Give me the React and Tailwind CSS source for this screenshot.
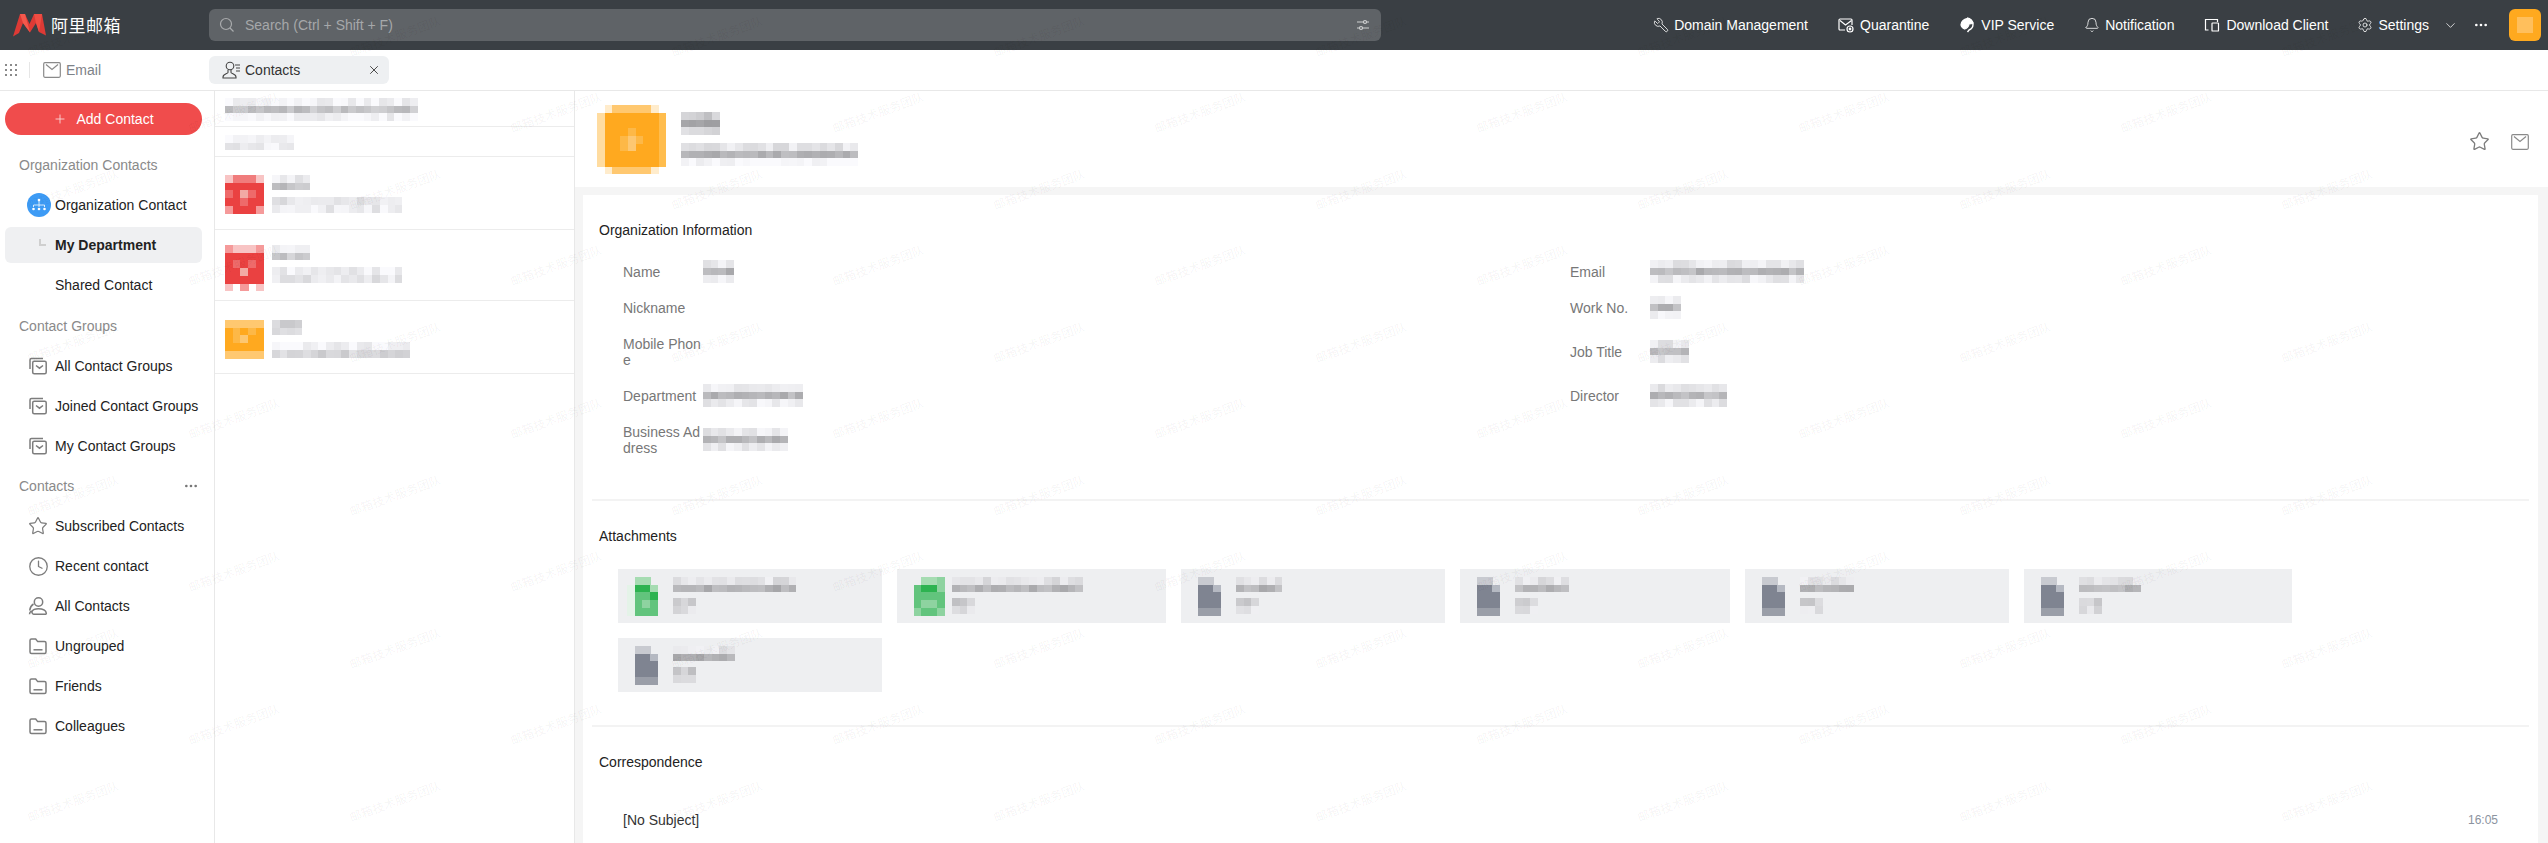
import React from 'react';
import { Bell, ChevronDown, Clock, Ellipsis, Plus, Settings, Star, Wrench, X } from 'lucide-react';

const CELL = 7.7;

// small deterministic noise, so the blurred blocks stay the same on every render
const noise = (seed, i) => {
  const v = Math.sin(seed * 97.13 + i * 12.9898) * 43758.5453;
  return v - Math.floor(v);
};

// pixelated block from rows of palette keys
const Mosaic = ({ rows, palette, cell = CELL, className = '' }) => (
  <svg
    className={`block shrink-0 ${className}`}
    width={rows[0].length * cell}
    height={rows.length * cell}
    shapeRendering="crispEdges"
  >
    {rows.map((row, y) =>
      row.split('').map((key, x) =>
        palette[key] ? (
          <rect key={`${x}-${y}`} x={x * cell} y={y * cell} width={cell + 0.5} height={cell + 0.5} fill={palette[key]} />
        ) : null
      )
    )}
  </svg>
);

// pixelated stand-in for a text line that was blurred out in the screenshot
const TextBlur = ({ cols, seed = 1, levels = [232, 184, 234], className = '' }) => (
  <svg
    className={`block shrink-0 ${className}`}
    width={cols * CELL}
    height={levels.length * 7.7}
    shapeRendering="crispEdges"
  >
    {levels.map((level, y) =>
      Array.from({ length: cols }).map((_, x) => {
        const g = Math.min(250, Math.round(level + (noise(seed + y, x) - 0.5) * 30));
        return (
          <rect
            key={`${x}-${y}`}
            x={x * CELL}
            y={y * 7.7}
            width={CELL + 0.5}
            height={8}
            fill={`rgb(${g},${g},${g + 3})`}
          />
        );
      })
    )}
  </svg>
);

const ORANGE = { p: '#ffeccc', o: '#ffc870', l: '#ffdca0', m: '#ffbd4e', O: '#ffa91f', c: '#fdb847', C: '#fdc771' };
const RED = { p: '#f8c4c4', o: '#f07c7c', O: '#ea4141', c: '#ee6a6a', C: '#f2aaa4', l: '#f59a9a' };
const GREEN = { a: '#a6dcb2', G: '#2db350', g: '#62c47d', h: '#8ed3a0', l: '#e4f3e8' };
const GRAY = { a: '#c8cad0', G: '#7f8491', b: '#b5b9c2', d: '#9a9ea8' };

const BIG_AVATAR = ['.pooooop.', 'lOOOOOOOm', 'lOOOOOOOm', 'lOOOcOOOm', 'lOOcCcOOm', 'lOOcCOOOm', 'lOOOOOOOm', 'lOOOOOOOm', '.pooooop.'];
const SMALL_ORANGE = ['ooooo', 'OcOcO', 'OcCOO', 'OOOOO', 'ooooo'];
const RED_A = ['pooop', 'OOOOO', 'cOCcO', 'OOcOO', 'lOOOl'];
const RED_B = ['lpppl', 'OOOOO', 'OcOcO', 'OOCOO', 'OOOOO', 'p.l.p'];
const GREEN_FILE = ['.aa.', 'lGGa', 'lggG', 'lghg', 'lggg'];
const GREEN_FILE_B = ['..aah', '.gGGh', '.gggg', '.ghhg', '.hggh'];
const GRAY_FILE = ['.aa.', '.GGb', '.GGG', '.GGG', '.ddd'];

const TopIcon = ({ children }) => (
  <svg width="18" height="18" viewBox="0 0 18 18" fill="none" stroke="currentColor" strokeWidth="1.2" className="shrink-0">
    {children}
  </svg>
);

const NAV_ITEMS = [
  { label: 'Domain Management', gap: 'mr-[29px]', icon: <Wrench size={16} strokeWidth={1.2} className="-scale-x-100" /> },
  {
    label: 'Quarantine',
    gap: 'mr-[29px]',
    icon: (
      <TopIcon>
        <path d="M8 14H3a1 1 0 0 1-1-1V4a1 1 0 0 1 1-1h11a1 1 0 0 1 1 1v5" />
        <path d="M3 4.5l5.5 4.5 6-4.5" />
        <circle cx="13" cy="13" r="3" />
        <circle cx="13" cy="13" r="0.8" fill="currentColor" />
      </TopIcon>
    ),
  },
  {
    label: 'VIP Service',
    gap: 'mr-[30px]',
    icon: (
      <TopIcon>
        <path d="M9 2a6.5 6.5 0 0 1 6 6.5 6 6 0 0 1-4 5.5l-1.5 2" strokeWidth="1.4" />
        <path d="M9 2.5C6 3 3 5.500 3 8.500c0 2 1.500 3.500 3.500 4.500 2-.5 4.500-2.500 4.500-5 1.500 0 3-.2 4-1-1.300-2.500-3.500-4.500-6-4.500z" fill="currentColor" />
      </TopIcon>
    ),
  },
  { label: 'Notification', gap: 'mr-[29px]', icon: <Bell size={16} strokeWidth={1.2} /> },
  {
    label: 'Download Client',
    gap: 'mr-[29px]',
    icon: (
      <TopIcon>
        <path d="M5.500 14H2.500V3.500h12V6" />
        <rect x="9" y="7" width="6.500" height="8" rx="0.600" />
      </TopIcon>
    ),
  },
  { label: 'Settings', gap: 'mr-[14px]', icon: <Settings size={16} strokeWidth={1.2} /> },
];

const GroupIcon = () => (
  <svg width="20" height="20" viewBox="0 0 20 20" fill="none" stroke="#7d7d7d" strokeWidth="1.5">
    <path d="M2 13V4a1.500 1.500 0 0 1 1.500-1.500H15" />
    <rect x="4.700" y="5.200" width="13.500" height="12.500" rx="1.500" />
    <path d="M8 9.500l3.500 2.700 3.500-2.700" />
  </svg>
);

const StarIcon = ({ size = 20 }) => <Star size={size} strokeWidth={1.5} color="#7d7d7d" />;
const ClockIcon = () => <Clock size={21} strokeWidth={1.5} color="#7d7d7d" />;

const PersonIcon = () => (
  <svg width="20" height="20" viewBox="0 0 20 20" fill="none" stroke="#7d7d7d" strokeWidth="1.5">
    <circle cx="10.500" cy="6" r="4.200" />
    <path d="M5.500 8C3 9.500 2 12 1.700 14.500" />
    <path d="M1.500 18.200c0-1.500.5-2.500 2-3.400M6 18.300h11c1 0 1.500-.5 1.300-1.300-.5-2.700-3.500-4.300-8-4.300-3 0-5.500 1.200-6.300 2.700-.4 1.500.8 2.900 2 2.900z" />
  </svg>
);

const FolderIcon = () => (
  <svg width="20" height="20" viewBox="0 0 20 20" fill="none" stroke="#7d7d7d" strokeWidth="1.5">
    <path d="M2 4.500A1.500 1.500 0 0 1 3.500 3h4.200l2 2.600h6.800a1.500 1.500 0 0 1 1.500 1.500v9a1.500 1.500 0 0 1-1.500 1.500h-13A1.500 1.500 0 0 1 2 16.100z" />
    <path d="M5.500 13.800h9" />
  </svg>
);

const OrgIcon = () => (
  <span className="w-[24px] h-[24px] rounded-full bg-[#3d9bf5] flex items-center justify-center">
    <svg width="16" height="16" viewBox="0 0 16 16" fill="#fff" stroke="#fff">
      <circle cx="8" cy="3" r="1.300" stroke="none" />
      <path d="M8 4v4M2.500 10V8h11v2M8 8v2" strokeWidth="0.800" fill="none" />
      <circle cx="2.500" cy="12" r="1.300" stroke="none" />
      <circle cx="8" cy="12" r="1.300" stroke="none" />
      <circle cx="13.500" cy="12" r="1.300" stroke="none" />
    </svg>
  </span>
);

const MailIcon = ({ className = '' }) => (
  <svg width="18" height="16" viewBox="0 0 18 16" fill="none" stroke="#8a8a8a" strokeWidth="1.200" className={className}>
    <rect x="0.700" y="0.700" width="16.600" height="14.600" rx="1.200" />
    <path d="M3 2.500l6 5 6-5" />
  </svg>
);

const GROUP_ROWS = ['All Contact Groups', 'Joined Contact Groups', 'My Contact Groups'];
const CONTACT_ROWS = [
  { label: 'Subscribed Contacts', icon: <StarIcon /> },
  { label: 'Recent contact', icon: <ClockIcon /> },
  { label: 'All Contacts', icon: <PersonIcon /> },
  { label: 'Ungrouped', icon: <FolderIcon /> },
  { label: 'Friends', icon: <FolderIcon /> },
  { label: 'Colleagues', icon: <FolderIcon /> },
];

const SectionLabel = ({ children }) => (
  <div className="h-[40px] pl-[14px] flex items-center text-[14px] text-[#8a8a8a]">{children}</div>
);

const SideRow = ({ icon, label }) => (
  <div className="h-[40px] pl-[23px] flex items-center text-[14px] text-[#222]">
    <span className="w-[27px] shrink-0 flex items-center">{icon}</span>
    {label}
  </div>
);

const Sidebar = () => (
  <aside className="w-[215px] shrink-0 border-r border-[#e8e8e8] px-[5px] pt-[12px]">
    <button className="w-[197px] h-[32px] rounded-full bg-[#f04c4c] text-white text-[14px] flex items-center justify-center gap-[9px]">
      <Plus size={14} strokeWidth={1.5} className="opacity-80" />
      Add Contact
    </button>
    <div className="mt-[10px]">
      <SectionLabel>Organization Contacts</SectionLabel>
    </div>
    <div className="h-[40px] pl-[22px] flex items-center text-[14px] text-[#222]">
      <span className="w-[28px] shrink-0">
        <OrgIcon />
      </span>
      Organization Contact
    </div>
    <div className="w-[197px] h-[36px] mt-[2px] pl-[34px] rounded-md bg-[#eff0f2] flex items-center text-[14px] font-bold text-[#222]">
      <span className="w-[16px] h-[8px] -mt-[5px] shrink-0 flex">
        <span className="w-[7px] h-[7px] border-l-2 border-b-2 border-[#cfcfcf]" />
      </span>
      My Department
    </div>
    <div className="h-[40px] mt-[2px] pl-[50px] flex items-center text-[14px] text-[#222]">Shared Contact</div>
    <div className="pt-px">
      <SectionLabel>Contact Groups</SectionLabel>
    </div>
    {GROUP_ROWS.map((label) => (
      <SideRow key={label} label={label} icon={<GroupIcon />} />
    ))}
    <div className="relative w-[197px]">
      <SectionLabel>Contacts</SectionLabel>
      <Ellipsis size={16} color="#777" className="absolute right-[3px] top-[12px]" />
    </div>
    {CONTACT_ROWS.map((row) => (
      <SideRow key={row.label} label={row.label} icon={row.icon} />
    ))}
  </aside>
);

const ContactList = () => (
  <section className="w-[360px] shrink-0 border-r border-[#e8e8e8]">
    <div className="h-[36px] pl-[10px] pt-[7px] border-b border-[#ececec]">
      <TextBlur cols={25} seed={3} levels={[242, 196, 244]} />
    </div>
    <div className="h-[30px] pl-[10px] pt-[8px] border-b border-[#ececec]">
      <TextBlur cols={9} seed={5} levels={[240, 238]} />
    </div>
    <div className="h-[73px] pl-[10px] pt-[18px] flex border-b border-[#ececec]">
      <Mosaic rows={RED_A} palette={RED} />
      <div className="ml-[8px] flex flex-col gap-[7px]">
        <TextBlur cols={5} seed={7} levels={[236, 194]} />
        <TextBlur cols={17} seed={8} levels={[228, 236]} />
      </div>
    </div>
    <div className="h-[71px] pl-[10px] pt-[15px] flex border-b border-[#ececec]">
      <Mosaic rows={RED_B} palette={RED} />
      <div className="ml-[8px] flex flex-col gap-[7px]">
        <TextBlur cols={5} seed={9} levels={[236, 200]} />
        <TextBlur cols={17} seed={10} levels={[238, 230]} />
      </div>
    </div>
    <div className="h-[73px] pl-[10px] pt-[19px] flex border-b border-[#ececec]">
      <Mosaic rows={SMALL_ORANGE} palette={ORANGE} />
      <div className="ml-[8px] flex flex-col gap-[7px]">
        <TextBlur cols={4} seed={11} levels={[210, 210]} />
        <TextBlur cols={18} seed={12} levels={[240, 214]} />
      </div>
    </div>
  </section>
);

const INFO_ROWS = [
  { label: 'Name', h: 'h-[36px]', value: <TextBlur cols={4} seed={20} levels={[238, 180, 232]} />, right: 'Email', rightValue: <TextBlur cols={20} seed={21} /> },
  { label: 'Nickname', h: 'h-[36px]', value: null, right: 'Work No.', rightValue: <TextBlur cols={4} seed={22} /> },
  { label: 'Mobile Phone', h: 'h-[52px]', value: null, right: 'Job Title', rightValue: <TextBlur cols={5} seed={23} /> },
  { label: 'Department', h: 'h-[36px]', value: <TextBlur cols={13} seed={24} />, right: 'Director', rightValue: <TextBlur cols={10} seed={25} /> },
  { label: 'Business Address', h: 'h-[52px]', value: <TextBlur cols={11} seed={26} />, right: null, rightValue: null },
];

const InfoCell = ({ label, value, x }) => (
  <div className={`${x} flex items-center text-[14px] leading-[16px] text-[#777]`}>
    <span className="w-[80px] shrink-0 break-all">{label}</span>
    {value}
  </div>
);

const ATTACHMENTS = [
  { rows: GREEN_FILE, palette: GREEN, name: 16, size: 3, seed: 31, width: 'w-[264px]' },
  { rows: GREEN_FILE_B, palette: GREEN, name: 17, size: 3, seed: 32, width: 'w-[269px]' },
  { rows: GRAY_FILE, palette: GRAY, name: 6, size: 3, seed: 33, width: 'w-[264px]' },
  { rows: GRAY_FILE, palette: GRAY, name: 7, size: 3, seed: 34, width: 'w-[270px]' },
  { rows: GRAY_FILE, palette: GRAY, name: 7, size: 3, seed: 35, width: 'w-[264px]' },
  { rows: GRAY_FILE, palette: GRAY, name: 8, size: 3, seed: 36, width: 'w-[268px]' },
  { rows: GRAY_FILE, palette: GRAY, name: 8, size: 3, seed: 37, width: 'w-[264px]' },
];

const AttachmentCard = ({ rows, palette, name, size, seed, width }) => (
  <div className={`${width} h-[54px] bg-[#eeeff1] flex pt-[8px] pl-[9px]`}>
    <span className="w-[46px] shrink-0">
      <Mosaic rows={rows} palette={palette} />
    </span>
    <div className="flex flex-col gap-[6px]">
      <TextBlur cols={name} seed={seed} levels={[226, 180]} />
      <TextBlur cols={size} seed={seed + 40} levels={[205, 224]} />
    </div>
  </div>
);

const Detail = () => (
  <main className="flex-1 min-w-0 bg-[#f5f5f5] overflow-hidden">
    <header className="h-[96px] bg-white flex items-start pl-[22px] pr-[19px] pt-[14px]">
      <Mosaic rows={BIG_AVATAR} palette={ORANGE} />
      <div className="ml-[15px] mt-[7px] flex flex-col gap-[8px]">
        <TextBlur cols={5} seed={41} levels={[205, 170, 222]} />
        <TextBlur cols={23} seed={42} levels={[228, 180, 250]} />
      </div>
      <div className="ml-auto mt-[26px] flex items-center gap-[21px]">
        <StarIcon size={21} />
        <MailIcon />
      </div>
    </header>
    <div className="mt-[8px] ml-[8px] mr-[10px] bg-white">
      <div className="mx-[9px] pt-[18px] h-[306px] border-b-2 border-[#f3f3f3]">
        <h3 className="h-[34px] pl-[7px] flex items-center text-[14px] text-[#222] font-normal">Organization Information</h3>
        <div className="mt-[7px] pl-[31px]">
          {INFO_ROWS.map((row) => (
            <div key={row.label} className={`${row.h} flex`}>
              <InfoCell x="w-[947px]" label={row.label} value={row.value} />
              {row.right && <InfoCell x="flex-1" label={row.right} value={row.rightValue} />}
            </div>
          ))}
        </div>
      </div>
      <div className="mx-[9px] pt-[18px] h-[226px] border-b-2 border-[#f3f3f3]">
        <h3 className="h-[34px] pl-[7px] flex items-center text-[14px] text-[#222] font-normal">Attachments</h3>
        <div className="mt-[16px] pl-[26px] w-[1720px] flex flex-wrap gap-x-[15px] gap-y-[15px]">
          {ATTACHMENTS.map((item) => (
            <AttachmentCard key={item.seed} {...item} />
          ))}
        </div>
      </div>
      <div className="mx-[9px] pt-[18px]">
        <h3 className="h-[34px] pl-[7px] flex items-center text-[14px] text-[#222] font-normal">Correspondence</h3>
        <div className="mt-[20px] ml-[24px] mr-[23px] h-[46px] pl-[7px] pr-[8px] pb-[2px] flex items-center justify-between border-b-2 border-[#f3f3f3]">
          <span className="text-[14px] text-[#333]">[No Subject]</span>
          <span className="text-[12px] text-[#8b93a0]">16:05</span>
        </div>
      </div>
    </div>
  </main>
);

const Watermarks = () => {
  const marks = [];
  for (let col = 0; col < 15; col++) {
    for (let row = 0; row < 6; row++) {
      const top = (col % 2 === 0 ? 36 : 112) + row * 153;
      if (top < 810) marks.push({ left: 73 + col * 161, top });
    }
  }
  return (
    <div className="absolute inset-0 overflow-hidden pointer-events-none">
      {marks.map((m) => (
        <span
          key={`${m.left}-${m.top}`}
          className="absolute whitespace-nowrap text-[12px] leading-none text-black/[0.05] -translate-x-1/2 -translate-y-1/2 -rotate-[20deg]"
          style={{ left: m.left, top: m.top, fontFamily: '"Noto Sans CJK SC", sans-serif' }}
        >
          邮箱技术服务团队
        </span>
      ))}
    </div>
  );
};

export default function App() {
  return (
    <div className="relative w-[2548px] h-[843px] overflow-hidden bg-white flex flex-col font-['Liberation_Sans',Arial,sans-serif]">
      {/* Top bar */}
      <div className="h-[50px] shrink-0 bg-[#3a3f44] flex items-center">
        <div className="w-[209px] shrink-0 pl-[13px] flex items-center">
          <svg width="33" height="23" viewBox="0 0 33 23">
            <path d="M0 22.500L7 0h5l4.500 10L21 0h8l4 21.500-7-3.500-3-9-6 9.500L10 9l-4 10z" fill="#dd3a35" />
            <path d="M7 0h5l5 18.500L10 9z" fill="#f4584c" />
            <path d="M21 0h8l-3 18-3-9z" fill="#ef4d43" />
          </svg>
          <span className="ml-[5px] text-[17px] tracking-[0.5px] text-white font-['Noto_Sans_CJK_SC',sans-serif]">阿里邮箱</span>
        </div>
        <div className="w-[1172px] h-[32px] rounded-md bg-[#5f6367] flex items-center pl-[10px] pr-[10px]">
          <svg width="16" height="16" viewBox="0 0 16 16" fill="none" stroke="#a9abad" strokeWidth="1.200">
            <circle cx="7" cy="7" r="5.500" />
            <path d="M11 11l3.500 3.500" />
          </svg>
          <span className="ml-[10px] text-[14px] text-[#a6a8aa]">Search (Ctrl + Shift + F)</span>
          <svg width="16" height="16" viewBox="0 0 16 16" fill="none" stroke="#d0d1d2" strokeWidth="1.200" className="ml-auto">
            <path d="M2 5h12M2 11h12" />
            <circle cx="10" cy="5" r="1.500" fill="#5f6367" />
            <circle cx="6" cy="11" r="1.500" fill="#5f6367" />
          </svg>
        </div>
        <nav className="ml-auto flex items-center text-[14px] text-white">
          {NAV_ITEMS.map((item) => (
            <div key={item.label} className={`flex items-center gap-[5px] ${item.gap}`}>
              {item.icon}
              {item.label}
            </div>
          ))}
          <ChevronDown size={15} strokeWidth={1.2} />
          <Ellipsis size={16} className="ml-[15px]" />
          <span className="ml-[20px] mr-[7px] w-[32px] h-[32px] rounded-md bg-[#ffa91f] overflow-hidden flex items-center justify-center">
            <span className="w-[16px] h-[16px] bg-[#ffbf5c]" />
          </span>
        </nav>
      </div>

      {/* Tab row */}
      <div className="h-[41px] shrink-0 border-b border-[#e8e8e8] flex items-center">
        <div className="w-[209px] shrink-0 pl-[5px] flex items-center">
          <svg width="13" height="13" viewBox="0 0 13 13" fill="#8a8a8a">
            <rect x="0" y="0" width="2" height="2" />
            <rect x="5" y="0" width="2" height="2" />
            <rect x="10" y="0" width="2" height="2" />
            <rect x="0" y="5" width="2" height="2" />
            <rect x="5" y="5" width="2" height="2" />
            <rect x="10" y="5" width="2" height="2" />
            <rect x="0" y="10" width="2" height="2" />
            <rect x="5" y="10" width="2" height="2" />
            <rect x="10" y="10" width="2" height="2" />
          </svg>
          <span className="ml-[11px] w-px h-[16px] bg-[#e6e6e6]" />
          <MailIcon className="ml-[13px]" />
          <span className="ml-[5px] text-[14px] text-[#7d8288]">Email</span>
        </div>
        <div className="w-[180px] h-[28px] rounded-md bg-[#eef0f2] flex items-center pl-[13px] pr-[8px] text-[14px] text-[#333]">
          <svg width="19" height="18" viewBox="0 0 19 18" fill="none" stroke="#444" strokeWidth="1.100">
            <circle cx="8" cy="5" r="3.800" />
            <path d="M6 9v2.500c0 1-5 1.500-5 4.500v1h13v-1c0-3-5-3.500-5-4.500V9" />
            <path d="M13 4h5M14 7h4M14 10h4" />
          </svg>
          <span className="ml-[4px]">Contacts</span>
          <X size={14} strokeWidth={1.5} className="ml-auto" />
        </div>
      </div>

      <div className="flex-1 min-h-0 flex">
        <Sidebar />
        <ContactList />
        <Detail />
      </div>

      <Watermarks />
    </div>
  );
}
